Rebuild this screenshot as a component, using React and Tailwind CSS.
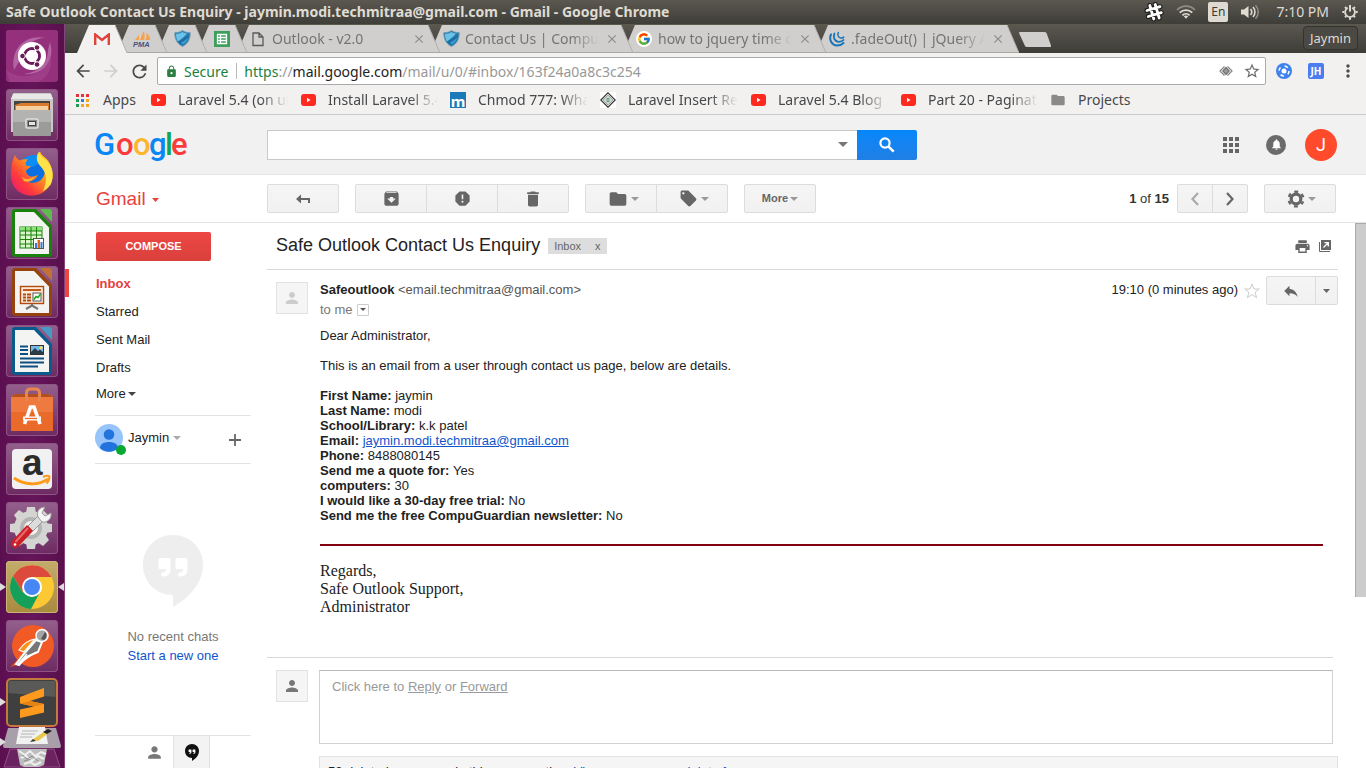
import React from "react";
import {
  MdArchive,
  MdReport,
  MdDelete,
  MdFolder,
  MdLocalOffer,
  MdSettings,
  MdPrint,
  MdPerson,
  MdReply,
  MdStarBorder,
  MdSearch,
  MdNotifications,
  MdArrowBack,
  MdArrowForward,
  MdRefresh,
  MdMoreVert,
  MdLock,
  MdClose,
} from "react-icons/md";
import { FcGoogle } from "react-icons/fc";

/* ---------- shared pieces ---------- */

function Caret({ className = "text-[#999]" }) {
  return (
    <svg viewBox="0 0 8 4" className={"h-1 w-2 shrink-0 " + className} aria-hidden="true">
      <path d="M0 0h8L4 4z" fill="currentColor" />
    </svg>
  );
}

function Shield() {
  return (
    <svg viewBox="0 0 17 17" className="h-[17px] w-[17px] shrink-0">
      <path d="M8.500.5C6.500 2 3.500 2.800.8 2.600.6 9 3 14 8.500 16.500 14 14 16.400 9 16.200 2.600 13.500 2.800 10.500 2 8.500.5z" fill="#2e7fae" stroke="#6f98ac" strokeWidth=".8" />
      <path d="M8.500 2C6.600 3.300 4.500 3.900 2 3.900c0 3 .7 5.500 2 7.500C8 8.500 11 6 13 3.600 11.300 3.400 10 3 8.500 2z" fill="#6cc3ea" />
      <path d="M4 11.500C8 10 12 7 14.800 4c.2 4.500-1.800 9-6.300 11.100C6.500 14.300 5 13 4 11.500z" fill="#1c6ea2" />
      <path d="M7 12.500c3-1.200 5.500-3.200 7.300-5.500-.6 3.200-2.500 6-5.800 7.600z" fill="#3aa0d2" />
    </svg>
  );
}

function YouTube() {
  return (
    <svg viewBox="0 0 16 12" className="h-3 w-4 shrink-0">
      <rect x="1" y="0" width="15" height="12" rx="3" fill="#ff2a1f" />
      <path d="M7 3.800v4.400L10.500 6z" fill="#fff" />
    </svg>
  );
}

/* ---------- desktop panel ---------- */

function TopPanel() {
  return (
    <header className="flex h-6 shrink-0 items-center justify-between bg-linear-to-b from-[#5b5850] to-[#3e3d38] pr-2 pl-1.5 text-[#dfdbd2]">
      <h1 className="truncate text-[14px] leading-6 font-bold">
        Safe Outlook Contact Us Enquiry - jaymin.modi.techmitraa@gmail.com - Gmail - Google Chrome
      </h1>
      <div className="flex shrink-0 items-center gap-3">
        <svg viewBox="0 0 20 20" className="h-5 w-5" fill="none" strokeLinecap="round">
          <path d="M5.800 3.500l4 13.500M11.200 2.500l4 13.500M3 8.500l13-3.800M4.300 14.500l13-3.800" stroke="#1e1e1c" strokeWidth="5" />
          <path d="M5.800 3.500l4 13.500M11.200 2.500l4 13.500M3 8.500l13-3.800M4.300 14.500l13-3.800" stroke="#fff" strokeWidth="2.800" />
        </svg>
        <svg viewBox="0 0 20 14" className="h-3.5 w-5" fill="none" strokeWidth="1.800">
          <path d="M1 5C6-.2 14-.2 19 5" stroke="#8f8c84" />
          <path d="M3.700 7.700c3.600-3.500 9-3.500 12.600 0" stroke="#dfdbd2" />
          <path d="M6.400 10.300c2-2 5.200-2 7.200 0" stroke="#dfdbd2" />
          <path d="M7.800 11.300L10 13.800l2.200-2.500c-1.300-1.100-3.100-1.100-4.400 0z" fill="#dfdbd2" />
        </svg>
        <span className="flex h-5 w-5 items-center justify-center rounded-[2px] bg-[#dfdbd2] text-xs leading-none text-[#3c3b37]">En</span>
        <svg viewBox="0 0 20 16" className="h-4 w-5" fill="none" strokeWidth="1.600">
          <path d="M1 5.500h3L8.500 2v12L4 10.500H1z" fill="#dfdbd2" />
          <path d="M10.500 5c1.500 1.700 1.500 4.300 0 6M13 3c2.600 2.800 2.600 7.200 0 10" stroke="#dfdbd2" />
          <path d="M15.500 1.200c3.700 4 3.700 9.600 0 13.600" stroke="#8f8c84" />
        </svg>
        <time className="mr-px ml-1 text-[14px] leading-6">7:10 PM</time>
        <svg viewBox="0 0 16 16" className="h-4 w-4" fill="none" stroke="#dfdbd2">
          <path d="M5.700 3.800a4.900 4.900 0 1 0 4.600 0" strokeWidth="1.800" />
          <path d="M8 1v6.500" strokeWidth="2" />
          <path d="M3 3l1.300 1.300M13 3l-1.300 1.300M.3 8h2M13.700 8h2M3 13.200l1.300-1.300M13 13.200l-1.300-1.300M8 13.500v2.300" strokeWidth="2" />
        </svg>
      </div>
    </header>
  );
}

/* ---------- launcher ---------- */

function Dash() {
  return (
    <svg viewBox="0 0 52 52">
      <rect width="52" height="52" rx="4" fill="#94307c" />
      <path d="M8 40C4 18 20 4 40 8 28 8 16 16 14 30zM44 12c6 20-8 34-26 32 14-2 24-10 24-24z" fill="#c07ab0" opacity=".7" />
      <path d="M0 40c16 12 40 6 44-14 4 10-2 22-12 26H4z" fill="#a74791" opacity=".6" />
      <circle cx="26" cy="26" r="14" fill="#fff" />
      <circle cx="26" cy="26" r="7.500" fill="none" stroke="#6b1c5b" strokeWidth="3" />
      <path d="M26 26L14 26M26 26l6.500-10.500M26 26l6.500 10.500" stroke="#fff" strokeWidth="1.500" />
      <circle cx="26" cy="26" r="6" fill="#fff" />
      <g fill="#6b1c5b" stroke="#fff" strokeWidth="1">
        <circle cx="16.500" cy="26" r="2.800" />
        <circle cx="31" cy="17.500" r="2.800" />
        <circle cx="31" cy="34.500" r="2.800" />
      </g>
    </svg>
  );
}

function Files() {
  return (
    <svg viewBox="0 0 52 52">
      <path d="M7 5q0-1 1-1h36q1 0 1 1l2 5v33H5V10z" fill="#c9c9c7" />
      <path d="M7 5h38l2 5H5z" fill="#e8e8e6" />
      <rect x="8" y="12" width="36" height="11" fill="#454441" />
      <path d="M9 16l6-2h28v8H9z" fill="#d97a2d" />
      <rect x="10" y="17" width="32" height="4" fill="#f5d0a0" />
      <path d="M7 21h38v25q0 1-1 1H8q-1 0-1-1z" fill="#9b9b99" />
      <path d="M7 21h38v12H7z" fill="#b3b3b1" />
      <rect x="20" y="30" width="12" height="9" rx="1.500" fill="#8a8a88" stroke="#e0e0de" strokeWidth="1.600" />
      <rect x="22.500" y="32.500" width="7" height="4" fill="#e4e4e4" stroke="#444" />
    </svg>
  );
}

function Firefox() {
  return (
    <svg viewBox="0 0 52 52">
      <defs>
        <linearGradient id="fxBody" x1="1" y1="0" x2="0" y2="1">
          <stop offset="0" stopColor="#ffe226" />
          <stop offset=".4" stopColor="#ff9a1c" />
          <stop offset=".7" stopColor="#ff3a3d" />
          <stop offset="1" stopColor="#e3127a" />
        </linearGradient>
      </defs>
      <circle cx="27" cy="25" r="17" fill="#0a6fe0" />
      <path d="M14 14c6-8 18-9 24-4-4 6-12 10-18 10z" fill="#0b8df5" />
      <path d="M9 7c1 3 3 4.500 5 5.500 3-1.500 6-1.200 8-1-2 1.500-3 3.500-2 6l5 1-5 4c0 6 7 8 12 4-2 6-8 8-12 6 8 6 20 0 19-12-1-5-6-8-8-11 0-3 1-5 3-6 1 4 5 5 8 9 4 6 6 13 4 20-3 9-11 15-20 15C13 48 4 38 5 25c0-7 1-12 4-18z" fill="url(#fxBody)" />
      <path d="M33 4c1 4 5 6 8 9 6 7 7 15 4 23-3 4-6 6-8 7 5-10 3-18-1-23-5-5-7-10-3-16z" fill="#ffe14a" />
      <path d="M15 28c3 4 9 4 14 0-2 5-7 7-11 5z" fill="#ffb02e" />
    </svg>
  );
}

function OfficeSheet({ color, light, children }) {
  return (
    <svg viewBox="0 0 52 52">
      <path d="M9 2h21l16 17v28q0 3-3 3H9q-3 0-3-3V5q0-3 3-3z" fill={color} />
      <path d="M34 2h9q3 0 3 3v10z" fill={light} />
      <path d="M9 5h19L43 20.500V47H9z" fill="#f4f4f2" />
      {children}
    </svg>
  );
}

function Calc() {
  return (
    <OfficeSheet color="#18820c" light="#5ebb4f">
      <rect x="14" y="20" width="22" height="21" fill="#d9f7c9" stroke="#18820c" />
      <rect x="14" y="20" width="22" height="4" fill="#8ee07a" />
      <path d="M14 24h22M14 28h22M14 32.500h22M14 37h22M19.500 20v21M25 20v21M30.500 20v21" stroke="#18820c" fill="none" />
      <rect x="27.500" y="31.500" width="10" height="10" fill="#fff" stroke="#555" />
      <path d="M29 36h2v5h-2z" fill="#2d7fd3" />
      <path d="M31.500 33h2.500v8h-2.500z" fill="#e8641b" />
      <path d="M34.500 35h2v6h-2z" fill="#2d7fd3" />
    </OfficeSheet>
  );
}

function Impress() {
  return (
    <OfficeSheet color="#97430e" light="#c1703a">
      <rect x="14.500" y="20.500" width="23" height="17" fill="#fdebdc" stroke="#b04a10" strokeWidth="1.400" />
      <path d="M17 24h18" stroke="#c35a1a" strokeWidth="2" />
      <path d="M17 28.500h3M17 31.500h3M17 34.500h3M21 28.500h4M21 31.500h4M21 34.500h4" stroke="#b04a10" strokeWidth="1.800" />
      <rect x="27" y="27" width="8" height="8" fill="#fff" stroke="#555" />
      <path d="M28 33.500l2-3 2 1 2.500-3.500" stroke="#1ca51c" strokeWidth="1.500" fill="none" />
      <path d="M26 38v2M20 43l6-3.500 6 3.500" stroke="#777" strokeWidth="2.200" fill="none" />
    </OfficeSheet>
  );
}

function Writer() {
  return (
    <OfficeSheet color="#0a5a8c" light="#4a98c4">
      <path d="M14 21.500h8M14 25h8M14 29h8M14 33.500h24M14 37.500h24M14 41.500h18" stroke="#0a4f80" strokeWidth="2" />
      <rect x="24.500" y="20.500" width="13" height="9" fill="#73b9ec" stroke="#333" />
      <path d="M25 29v-2l4-4 3 3 2-1.500 3.500 3V29z" fill="#2c3c46" />
      <circle cx="35" cy="22.800" r="1.500" fill="#ffe14a" />
    </OfficeSheet>
  );
}

function Software() {
  return (
    <svg viewBox="0 0 52 52">
      <path d="M5 13l4-3h34l4 3v34H5z" fill="#ee7a3f" />
      <path d="M5 13l4-3h34l4 3z" fill="#b3501e" />
      <path d="M5 28h42v19H5z" fill="#ea6a2a" />
      <path d="M20.500 17V9q0-4 4-4h5q4 0 4 4v8" fill="none" stroke="#e8864f" strokeWidth="3" />
      <path d="M18.500 40l6-17h3.500l6 17" fill="none" stroke="#fff" strokeWidth="3.600" />
      <path d="M17 34.500h18" stroke="#fff" strokeWidth="4" />
      <path d="M19 34.500h12" stroke="#ea6a2a" strokeWidth="1.300" />
    </svg>
  );
}

function Amazon() {
  return (
    <svg viewBox="0 0 52 52">
      <rect x="6" y="6" width="40" height="40" rx="4" fill="#f1f1f1" />
      <text x="16" y="32" fontFamily="Liberation Sans, sans-serif" fontWeight="700" fontSize="37" fill="#2b2b2b">a</text>
      <path d="M8 35c10 7 24 8 34 1" fill="none" stroke="#ff9a1a" strokeWidth="2.800" />
      <path d="M37 34c3-1.500 5-1.500 6.500-.5 0 2.500-1 5-3 7" fill="none" stroke="#ff9a1a" strokeWidth="2" />
    </svg>
  );
}

function SystemSettings() {
  return (
    <svg viewBox="0 0 52 52">
      <g fill="#d4d4d2">
        <circle cx="25" cy="26" r="17" />
        <path d="M21 5h8l1 7H20zM21 47h8l1-7H20zM4 22v8l7 1V21zM46 22v8l-7 1V21zM8 13l5-5 6 4-7 7zM37 8l6 6-4 6-8-8zM8 39l5 5 6-4-7-7zM37 44l6-6-4-6-8 8z" />
      </g>
      <circle cx="25" cy="26" r="11" fill="#b4b4b2" />
      <circle cx="25" cy="26" r="7" fill="#f1f1f0" />
      <path d="M22 24L33 13l5 5-11 11z" fill="#dcdcdc" stroke="#999" />
      <path d="M32 15c-2-5 1-10 7-10l-3 6 3 3 6-3c1 6-4 10-9 9z" fill="#f4f4f4" stroke="#999" />
      <path d="M21 23l6 6-15 16c-4 3-9-2-6-6z" fill="#cc2027" />
      <path d="M22 26L9.500 40" stroke="#e9686b" strokeWidth="2" />
      <circle cx="9" cy="42.500" r="1.300" fill="#fff" />
    </svg>
  );
}

function ChromeIcon() {
  return (
    <svg viewBox="0 0 52 52">
      <circle cx="26" cy="26" r="22" fill="#fcc934" />
      <path d="M26 16h19.500A22 22 0 0 0 7 15l9.500 16z" fill="#dc4a3d" />
      <path d="M7 15a22 22 0 0 0 18 33l9-17-8 5-9.500-5z" fill="#14a05a" />
      <circle cx="26" cy="26" r="10" fill="#fff" />
      <circle cx="26" cy="26" r="8" fill="#4787f3" />
    </svg>
  );
}

function Postman() {
  return (
    <svg viewBox="0 0 52 52">
      <circle cx="27" cy="26" r="21" fill="#f15a24" />
      <path d="M4 47l9-9 2 6z" fill="#e0491c" />
      <path d="M10 44l7-9 13-15 6 2-4 10-12 5-7 8z" fill="#777" stroke="#fff" strokeWidth="2" />
      <path d="M13 30c4-6 9-10 16-11L18 32z" fill="#f7941e" stroke="#fff" strokeWidth="1.200" />
      <circle cx="36" cy="15.500" r="6" fill="#a5a5a5" stroke="#fff" strokeWidth="1.500" />
      <path d="M35 19l4-7c2 2 2 6-1 8z" fill="#555" />
      <path d="M12 44l9-10M17 41l13-9" stroke="#fff" strokeWidth="1.300" />
    </svg>
  );
}

function Sublime() {
  return (
    <svg viewBox="0 0 52 49">
      <rect x="1" y="1" width="50" height="47" rx="4" fill="#3f3f3f" stroke="#c47a3c" strokeWidth="2" />
      <path d="M2.500 3h47v16L2.500 15z" fill="#6a6a68" opacity=".6" />
      <path d="M14 19L38 10v8.500L24 23l14 3v8.500L14 40v-8.500l14-3-14-3z" fill="#ff9a1f" />
      <path d="M14 25.500L24 23l14 3-10 2.500z" fill="#e58412" />
    </svg>
  );
}

function TrashStack() {
  return (
    <svg viewBox="0 0 60 41" className="h-[41px] w-[60px]">
      <path d="M6 1h48l5 18q0 2-2 2H3q-2 0-2-2z" fill="#a99fab" />
      <path d="M8 22h44l6 18H2z" fill="#6b2260" stroke="#8d4d84" />
      <path d="M17 0h26l3 17H14z" fill="#f1f1f1" />
      <path d="M20 4h16M19 7h14M18 10h12" stroke="#b5b5b5" />
      <path d="M30 13l13-9 5 1-12 9z" fill="#e8c84a" />
      <path d="M41 5l5-3 4 2-5 3z" fill="#222" />
      <path d="M28 15l3-3 3 2z" fill="#333" />
      <path d="M15 22h30l-3 16-5 2H22l-4-2z" fill="#bdbdbd" />
      <path d="M17 24l6 4 5-4 5 5 6-4 5 2M19 31l5-2 6 5 6-5 6 3M22 37l6-2 5 3 6-3" stroke="#efefef" strokeWidth="2" fill="none" />
      <path d="M20 28l5 4 5-3 6 5M22 34l7-2" stroke="#8e8e8e" fill="none" />
    </svg>
  );
}

const launcherItems = [
  { name: "Search your computer", icon: <Dash /> },
  { name: "Files", icon: <Files /> },
  { name: "Firefox", icon: <Firefox /> },
  { name: "LibreOffice Calc", icon: <Calc /> },
  { name: "LibreOffice Impress", icon: <Impress /> },
  { name: "LibreOffice Writer", icon: <Writer /> },
  { name: "Ubuntu Software", icon: <Software /> },
  { name: "Amazon", icon: <Amazon /> },
  { name: "System Settings", icon: <SystemSettings /> },
  { name: "Google Chrome", icon: <ChromeIcon />, active: true },
  { name: "Postman", icon: <Postman /> },
];

function Launcher() {
  return (
    <nav aria-label="Launcher" className="flex w-[65px] shrink-0 flex-col items-center gap-[7px] overflow-hidden border-r border-[#84447c] bg-linear-to-r from-[#5c0f50] via-[#66155a] to-[#58104c] pt-1.5">
      {launcherItems.map((item) => (
        <button
          key={item.name}
          aria-label={item.name}
          className={
            item.active
              ? "relative h-[52px] w-[52px] shrink-0 rounded-[4px] bg-linear-to-b from-[#c4ac6c] to-[#a98b3d] shadow-[inset_0_0_0_1px_#c9b57c]"
              : "relative h-[52px] w-[52px] shrink-0 rounded-[4px] bg-linear-to-b from-[#94608c] to-[#6d2a62] shadow-[inset_0_0_0_1px_#8d5385]"
          }
        >
          {item.icon}
          {item.active && (
            <>
              <span className="absolute top-[22px] -left-1.5 h-2 w-1.5 bg-[#ddd] [clip-path:polygon(0_0,100%_50%,0_100%)]" />
              <span className="absolute top-[22px] -right-1.5 h-2 w-1.5 bg-[#ddd] [clip-path:polygon(100%_0,0_50%,100%_100%)]" />
            </>
          )}
        </button>
      ))}
      <div className="flex flex-col items-center">
        <button aria-label="Sublime Text" className="relative -mt-px h-[49px] w-[52px] shrink-0">
          <Sublime />
          <span className="absolute top-[20px] -left-1.5 h-2 w-1.5 bg-[#ddd] [clip-path:polygon(0_0,100%_50%,0_100%)]" />
        </button>
        <button aria-label="Text Editor and Trash" className="relative shrink-0">
          <TrashStack />
          <span className="absolute top-[11px] -left-0.5 h-2 w-1.5 bg-[#ddd] [clip-path:polygon(0_0,100%_50%,0_100%)]" />
        </button>
      </div>
    </nav>
  );
}

/* ---------- browser chrome ---------- */

const tabs = [
  {
    name: "Gmail",
    active: true,
    z: "z-[8]",
    icon: (
      <svg viewBox="0 0 16 12" className="h-3 w-4">
        <path d="M1 0h14v12H1z" fill="#f2f2f2" />
        <path d="M1.200 12V1.500L8 7l6.800-5.500V12" fill="none" stroke="#e0433a" strokeWidth="2.400" />
      </svg>
    ),
  },
  {
    name: "phpMyAdmin",
    z: "z-[7]",
    icon: (
      <svg viewBox="0 0 18 16" className="h-4 w-[18px]">
        <path d="M2 9l4-5v5zM7 9l3.500-9c1.500 3 1.500 6 .5 9zM12 9c2-2 2-5 1-7 3 1 4 4 4 7z" fill="#f7a24a" />
        <text x="0" y="15.500" fontFamily="Liberation Sans, sans-serif" fontWeight="700" fontStyle="italic" fontSize="7.500" fill="#4c4f7a">PMA</text>
      </svg>
    ),
  },
  { name: "Safe Outlook", z: "z-[6]", icon: <Shield /> },
  {
    name: "Google Sheets",
    z: "z-[5]",
    icon: (
      <svg viewBox="0 0 16 16" className="h-4 w-4">
        <rect width="16" height="16" fill="#3c9f5c" />
        <path d="M3.500 3.500h9v9h-9zM3.500 6.500h9M3.500 9.500h9M6.500 3.500v9" fill="none" stroke="#fff" strokeWidth="1.300" />
      </svg>
    ),
  },
  {
    title: "Outlook - v2.0",
    z: "z-[4]",
    icon: (
      <svg viewBox="0 0 16 16" className="h-4 w-4">
        <path d="M3 2h6l4 4v8.500H3zM9 2v4h4" fill="none" stroke="#5a5a5a" strokeWidth="1.300" />
      </svg>
    ),
  },
  { title: "Contact Us | CompuG", z: "z-[3]", icon: <Shield /> },
  {
    title: "how to jquery time ou",
    z: "z-[2]",
    icon: (
      <span className="flex h-4 w-4 items-center justify-center rounded-full bg-white">
        <FcGoogle size={14} />
      </span>
    ),
  },
  {
    title: ".fadeOut() | jQuery A",
    z: "z-[1]",
    icon: (
      <svg viewBox="0 0 16 16" className="h-4 w-4" fill="none" stroke="#1b75b5" strokeLinecap="round">
        <path d="M2 3.500C-.3 8.500 2.500 14 8 14.500c3 0 5-1 6.500-2.500" strokeWidth="2" />
        <path d="M5.500 2.500C3.500 6.500 5.800 10.300 9.500 10.800c2.200.1 4-.6 5-1.800" strokeWidth="1.800" />
        <path d="M9.300 1.500C8.200 4 9.300 6.600 11.500 7c1.300.2 2.500-.2 3.200-.9" strokeWidth="1.500" />
      </svg>
    ),
  },
];

function Tab({ tab }) {
  const fill = tab.active ? "#f2f1f0" : "#d0cfce";
  return (
    <div className={"-ml-2.5 flex h-[29px] min-w-0 " + tab.z + " " + (tab.title ? "w-[203px]" : "w-[50px] shrink-0")}>
      <svg viewBox="0 0 12 29" className="h-[29px] w-3 shrink-0">
        <path d="M0 29L12 1V29z" fill={fill} />
        {!tab.active && <path d="M0 28.500h12" stroke="#a9a8a6" />}
      </svg>
      <div
        className={
          "mt-px flex min-w-0 flex-1 items-center " +
          (tab.active ? "bg-[#f2f1f0]" : "border-b border-[#a9a8a6] bg-[#d0cfce]") +
          (tab.title ? "" : " justify-center")
        }
      >
        {tab.title ? (
          <>
            <span className="flex w-[18px] shrink-0 justify-center">{tab.icon}</span>
            <span className="ml-[5px] flex-1 overflow-hidden text-[14px] whitespace-nowrap text-[#757472] [mask-image:linear-gradient(to_right,#000_80%,transparent)]">{tab.title}</span>
            <button aria-label={"Close " + tab.title} className="mr-0.5 ml-1.5 shrink-0 text-[#8c8b89]">
              <MdClose size={14} />
            </button>
          </>
        ) : (
          <button aria-label={tab.name}>{tab.icon}</button>
        )}
      </div>
      <svg viewBox="0 0 12 29" className="h-[29px] w-3 shrink-0">
        <path d="M0 1L12 29H0z" fill={fill} />
        {!tab.active && <path d="M0 28.500h12" stroke="#a9a8a6" />}
        <path d="M0 1L11.800 28.500" stroke="#b0afad" fill="none" />
      </svg>
    </div>
  );
}

function TabStrip() {
  return (
    <div className="flex h-[29px] shrink-0 bg-linear-to-b from-[#5b5850] to-[#3e3d38] pr-2 pl-[22px]">
      {tabs.map((tab, i) => (
        <Tab key={i} tab={tab} />
      ))}
      <button aria-label="New tab" className="mt-2 h-[15px] w-8 shrink-0">
        <svg viewBox="0 0 32 15">
          <path d="M0 1q0-1 1-1h24q2 0 2.500 1L32 13.500q.5 1.500-1 1.500H8q-1.500 0-2-1z" fill="#d0cfce" />
        </svg>
      </button>
      <button className="mt-0.5 ml-auto h-6 shrink-0 self-start rounded-[4px] border border-[#33322e] bg-[#4b4943] px-1.5 text-[13px] leading-5 text-[#dfdbd2]">
        Jaymin
      </button>
    </div>
  );
}

function AddressBar() {
  return (
    <div className="flex h-9 shrink-0 items-center bg-[#f2f1f0] pr-0.5 pl-1 text-[#4a4a4a]">
      <button aria-label="Back" className="flex w-7 justify-center"><MdArrowBack size={20} /></button>
      <button aria-label="Forward" className="flex w-7 justify-center text-[#cfcecd]"><MdArrowForward size={20} /></button>
      <button aria-label="Reload" className="flex w-7 justify-center"><MdRefresh size={21} /></button>
      <div className="mr-0.5 ml-1 flex h-7 flex-1 items-center rounded-[2px] border border-[#aaa] bg-white pr-1 pl-[7px] text-[14px]">
        <MdLock size={13} className="text-[#2a7f41]" />
        <span className="ml-1.5 text-[#1a7f3c]">Secure</span>
        <span className="mr-[7px] ml-2 h-4 w-px bg-[#bbb]" />
        <span className="flex-1 whitespace-nowrap text-[#999]">
          <span className="text-[#1a7f3c]">https</span>://<span className="text-[#222]">mail.google.com</span>/mail/u/0/#inbox/163f24a0a8c3c254
        </span>
        <svg viewBox="0 0 14 12" className="mr-2.5 h-3 w-3.5">
          <path d="M5.500 1.500L1 6l4.500 4.500M8.500 1.500L13 6l-4.500 4.500" fill="none" stroke="#858585" strokeWidth="1.200" />
          <path d="M7 1.500L11 6l-4 4.500L3 6z" fill="#757575" />
          <path d="M7 4v4M5 6h4" stroke="#aaa" />
        </svg>
        <button aria-label="Bookmark this page" className="text-[#6b6b6b]"><MdStarBorder size={18} /></button>
      </div>
      <button aria-label="Extension" className="flex w-8 justify-center">
        <svg viewBox="0 0 16 16" className="h-4 w-4">
          <circle cx="8" cy="8" r="8" fill="#3f82ee" />
          <circle cx="8" cy="8" r="2.500" fill="#fff" />
          <circle cx="8" cy="8" r="5" fill="none" stroke="#fff" strokeWidth="1.500" strokeDasharray="3.500 4.350" />
        </svg>
      </button>
      <button className="flex w-8 justify-center">
        <span className="flex h-4 w-4 items-center justify-center rounded-[2px] bg-[#4b7df0] text-[10px] leading-none font-bold text-white">JH</span>
      </button>
      <button aria-label="Menu" className="flex w-8 justify-center"><MdMoreVert size={20} /></button>
    </div>
  );
}

const bookmarks = [
  { title: "Laravel 5.4 (on ub", icon: <YouTube /> },
  { title: "Install Laravel 5.4", icon: <YouTube /> },
  {
    title: "Chmod 777: What",
    icon: <span className="flex h-4 w-4 items-end justify-center overflow-hidden bg-[#1d7ab8] text-[15px] leading-[14px] font-bold text-white">m</span>,
  },
  {
    title: "Laravel Insert Re",
    icon: (
      <svg viewBox="0 0 16 16" className="h-4 w-4 bg-white">
        <path d="M8 .8L15.200 8 8 15.200.8 8z" fill="#fff" stroke="#333" strokeWidth="1.200" />
        <path d="M8 3.300L12.700 8 8 12.700 3.300 8z" fill="#fff" stroke="#555" strokeWidth=".8" />
        <path d="M5.500 8h5M6.500 6.300h3M6.500 9.700h3" stroke="#2f7a4a" strokeWidth="1.100" />
      </svg>
    ),
  },
  { title: "Laravel 5.4 Blog", icon: <YouTube /> },
  { title: "Part 20 - Paginat", icon: <YouTube /> },
];

function BookmarksBar() {
  const grid = ["#e8303a", "#e8303a", "#e8303a", "#1f9b55", "#3b78e7", "#f6a623", "#1f9b55", "#f6a623", "#f6a623"];
  return (
    <nav aria-label="Bookmarks" className="flex h-[26px] shrink-0 items-start border-b border-[#cbcac8] bg-[#f2f1f0] pl-2.5 text-[14px] leading-[22px] text-[#47484a]">
      <a href="#apps" className="flex w-[75px] shrink-0 items-center gap-[13px]">
        <svg viewBox="0 0 15 15" className="h-[15px] w-[15px] shrink-0">
          {grid.map((c, i) => (
            <rect key={i} x={1 + (i % 3) * 5} y={1 + Math.floor(i / 3) * 5} width="3" height="3" fill={c} />
          ))}
        </svg>
        Apps
      </a>
      {bookmarks.map((b) => (
        <a key={b.title} href="#bookmark" className="flex w-[150px] items-center gap-3">
          {b.icon}
          <span className="w-[110px] overflow-hidden whitespace-nowrap [mask-image:linear-gradient(to_right,#000_75%,transparent)]">{b.title}</span>
        </a>
      ))}
      <a href="#projects" className="flex items-center gap-3">
        <MdFolder size={16} className="text-[#8a8a88]" />
        Projects
      </a>
    </nav>
  );
}

/* ---------- Gmail ---------- */

function GoogleHeader() {
  return (
    <header className="flex h-[60px] shrink-0 items-center border-b border-[#e5e5e5] bg-[#f1f1f1] pr-[29px] pl-[30px]">
      <a href="#google" aria-label="Google" className="w-[172px] shrink-0">
        <svg viewBox="0 0 94 36" className="h-9 w-[94px]" fontFamily="Roboto, sans-serif" fontWeight="500" fontSize="31">
          <text y="28">
            <tspan x="-1" fill="#0a86f5">G</tspan>
            <tspan x="21" fill="#fb3b3b">o</tspan>
            <tspan x="38" fill="#fdb52e">o</tspan>
            <tspan x="54" fill="#0a86f5">g</tspan>
            <tspan x="70" fill="#10a558">l</tspan>
            <tspan x="76" fill="#fb3b3b">e</tspan>
          </text>
        </svg>
      </a>
      <form className="flex h-[30px] w-[650px]" role="search">
        <div className="flex flex-1 items-center border border-r-0 border-[#c9c9c9] bg-white">
          <input aria-label="Search mail" className="h-full min-w-0 flex-1 px-2 outline-none" />
          <button type="button" aria-label="Search options" className="flex h-full w-7 items-center justify-center">
            <svg viewBox="0 0 10 5" className="h-[5px] w-2.5"><path d="M0 0h10L5 5z" fill="#777" /></svg>
          </button>
        </div>
        <button type="button" aria-label="Search" className="flex w-[60px] items-center justify-center rounded-r-[2px] bg-linear-to-b from-[#0487fb] to-[#1f7fe4] text-white">
          <svg viewBox="0 0 16 16" className="h-4 w-4" fill="none" stroke="#fff">
            <circle cx="6" cy="6" r="4.600" strokeWidth="2.200" />
            <path d="M9.300 9.300l5.400 5.400" strokeWidth="2.600" />
          </svg>
        </button>
      </form>
      <div className="ml-auto flex items-center">
        <button aria-label="Google apps" className="mr-[27px]">
          <svg viewBox="0 0 16 16" className="h-4 w-4" fill="#666">
            <path d="M0 0h4v4H0zM6 0h4v4H6zM12 0h4v4h-4zM0 6h4v4H0zM6 6h4v4H6zM12 6h4v4h-4zM0 12h4v4H0zM6 12h4v4H6zM12 12h4v4h-4z" />
          </svg>
        </button>
        <button aria-label="Notifications" className="mr-[19px] flex h-5 w-5 items-center justify-center rounded-full bg-[#6b6b6b] text-white">
          <MdNotifications size={13} />
        </button>
        <button className="h-8 w-8 rounded-full bg-[#ff4a2b] font-[Roboto,sans-serif] text-lg leading-8 text-white">J</button>
      </div>
    </header>
  );
}

const btn = "flex h-[29px] items-center justify-center border border-[#dcdcdc] bg-linear-to-b from-[#f5f5f5] to-[#f1f1f1] text-[#666]";

function Toolbar() {
  return (
    <div className="flex h-12 shrink-0 items-center border-b border-[#e5e5e5] pr-[30px] pl-[31px]">
      <button className="flex w-[171px] shrink-0 items-center gap-1.5 pt-0.5 text-left text-[19px] text-[#e8423e]">
        Gmail <svg viewBox="0 0 7 4" className="h-1 w-[7px]"><path d="M0 0h7L3.500 4z" fill="#e8423e" /></svg>
      </button>
      <div className="flex gap-4">
        <button aria-label="Back to inbox" className={btn + " w-[72px] rounded-[2px]"}>
          <svg viewBox="0 0 14 10" className="h-2.5 w-3.5"><path d="M0 5l5-4.500V4h9v5h-2V6H5v3.500z" fill="#666" /></svg>
        </button>
        <div className="flex">
          <button aria-label="Archive" className={btn + " w-[72px] rounded-l-[2px]"}><MdArchive size={19} /></button>
          <button aria-label="Report spam" className={btn + " -ml-px w-[72px]"}><MdReport size={19} /></button>
          <button aria-label="Delete" className={btn + " -ml-px w-[72px] rounded-r-[2px]"}><MdDelete size={20} /></button>
        </div>
        <div className="flex">
          <button aria-label="Move to" className={btn + " w-[72px] gap-[3px] rounded-l-[2px] pl-1"}><MdFolder size={20} /><Caret /></button>
          <button aria-label="Labels" className={btn + " -ml-px w-[72px] gap-[3px] rounded-r-[2px] pl-1"}><MdLocalOffer size={19} /><Caret /></button>
        </div>
        <button className={btn + " w-[72px] gap-0.5 rounded-[2px] text-[11px] font-bold text-[#444]"}>More<Caret /></button>
      </div>
      <div className="ml-auto flex items-center">
        <p className="mr-2 text-[13px] text-[#333]"><b>1</b> of <b>15</b></p>
        <button aria-label="Newer" className={btn + " w-9 rounded-l-[2px]"}>
          <svg viewBox="0 0 8 14" className="h-3.5 w-2"><path d="M7 1L1.500 7 7 13" fill="none" stroke="#aaa" strokeWidth="2.200" /></svg>
        </button>
        <button aria-label="Older" className={btn + " -ml-px w-9 rounded-r-[2px]"}>
          <svg viewBox="0 0 8 14" className="h-3.5 w-2"><path d="M1 1l5.500 6L1 13" fill="none" stroke="#666" strokeWidth="2.200" /></svg>
        </button>
        <button aria-label="Settings" className={btn + " ml-4 w-[72px] gap-[3px] rounded-[2px] pl-0.5"}>
          <svg viewBox="0 0 18 18" className="h-[18px] w-[18px]" fill="none" stroke="#666">
            <circle cx="9" cy="9" r="4.800" strokeWidth="3.200" />
            <circle cx="9" cy="9" r="7.400" strokeWidth="2.400" strokeDasharray="3.800 3.950" strokeDashoffset="1.900" transform="rotate(30 9 9)" />
          </svg>
          <Caret />
        </button>
      </div>
    </div>
  );
}

function Bubble({ className, fill, quote }) {
  return (
    <svg viewBox="0 0 60 72" className={className}>
      <path d="M30 0C13 0 0 13 0 30s13 30 30 30v12c16-9 30-24 30-42C60 13 47 0 30 0z" fill={fill} />
      <path d="M17 23h9q1.500 0 1.500 1.500V34c0 5-2.500 7.500-7.500 7.500q-2 0-2-2t2-2q3-.5 3-3.500h-6q-1.500 0-1.500-1.500v-8Q15.500 23 17 23zM34 23h9q1.500 0 1.500 1.500V34c0 5-2.500 7.500-7.500 7.500q-2 0-2-2t2-2q3-.5 3-3.500h-6q-1.500 0-1.500-1.500v-8Q32.500 23 34 23z" fill={quote} />
    </svg>
  );
}

function Sidebar() {
  const folders = ["Starred", "Sent Mail", "Drafts"];
  return (
    <aside className="flex w-[202px] shrink-0 flex-col text-[13px] text-[#222]">
      <button className="mt-[9px] ml-[31px] h-[29px] w-[115px] rounded-[2px] bg-linear-to-b from-[#ee4743] to-[#d9403c] text-[11px] font-bold text-white">
        COMPOSE
      </button>
      <nav aria-label="Folders" className="mt-2 flex flex-col leading-[26px]">
        <a href="#inbox" className="border-l-4 border-[#ef4640] pt-0.5 pl-[27px] font-bold text-[#e8423e]">Inbox</a>
        {folders.map((f) => (
          <a key={f} href="#folder" className="pt-0.5 pl-[31px]">{f}</a>
        ))}
        <button className="flex items-center gap-0.5 pb-0.5 pl-[31px] text-left">More <Caret className="text-[#444]" /></button>
      </nav>
      <div className="mt-1.5 mr-4 ml-[30px] flex h-[49px] items-center border-y border-[#e2e2e2]">
        <div className="relative -mt-1">
          <svg viewBox="0 0 28 28" className="h-7 w-7">
            <circle cx="14" cy="14" r="14" fill="#97c4fb" />
            <circle cx="14" cy="10.500" r="5.300" fill="#2273dd" />
            <path d="M5 24c0-4 4-6 9-6s9 2 9 6c-5 5-13 5-18 0z" fill="#2273dd" />
          </svg>
          <span className="absolute -right-[3px] -bottom-[3px] h-2.5 w-2.5 rounded-full bg-[#08a832]" />
        </div>
        <button className="ml-[5px] flex items-center gap-1 pb-1">Jaymin <Caret className="text-[#aaa]" /></button>
        <button aria-label="New conversation" className="mr-2.5 ml-auto text-[#666]">
          <svg viewBox="0 0 12 12" className="h-3 w-3"><path d="M6 0v12M0 6h12" stroke="currentColor" strokeWidth="1.800" /></svg>
        </button>
      </div>
      <div className="mt-[71px] mr-4 ml-[30px] flex flex-col items-center leading-[19px]">
        <Bubble className="h-[72px] w-[60px]" fill="#eeeeee" quote="#ffffff" />
        <p className="mt-5 text-[#777]">No recent chats</p>
        <a href="#chat" className="text-[#15c]">Start a new one</a>
      </div>
      <div className="mt-auto mr-4 ml-[30px] flex h-[33px] shrink-0 justify-end border-t border-[#e2e2e2]">
        <button aria-label="Contacts" className="flex w-[37px] items-center justify-center text-[#777]"><MdPerson size={19} /></button>
        <button aria-label="Hangouts" className="mr-[41px] flex w-[37px] items-center justify-center border-x border-[#e2e2e2] bg-[#f3f3f3]">
          <Bubble className="h-[17px] w-3.5" fill="#111111" quote="#ffffff" />
        </button>
      </div>
    </aside>
  );
}

const details = [
  ["First Name:", "jaymin"],
  ["Last Name:", "modi"],
  ["School/Library:", "k.k patel"],
  ["Email:", "jaymin.modi.techmitraa@gmail.com"],
  ["Phone:", "8488080145"],
  ["Send me a quote for:", "Yes"],
  ["computers:", "30"],
  ["I would like a 30-day free trial:", "No"],
  ["Send me the free CompuGuardian newsletter:", "No"],
];

function Message() {
  return (
    <main className="min-w-0 flex-1 overflow-hidden pr-[17px] text-[13px] text-[#222]">
      <div className="flex h-[47px] items-center border-b border-[#d8d8d8] pr-[7px] pl-[9px]">
        <h2 className="-mt-0.5 text-[18px]">Safe Outlook Contact Us Enquiry</h2>
        <span className="ml-2 flex h-4 items-center gap-3.5 bg-[#ddd] px-1.5 text-[11px] leading-4 text-[#666]">
          Inbox <button aria-label="Remove label">x</button>
        </span>
        <button aria-label="Print" className="ml-auto text-[#666]"><MdPrint size={17} /></button>
        <button aria-label="Open in new window" className="ml-2">
          <svg viewBox="0 0 12 12" className="h-3 w-3">
            <path d="M2 0h10v10H2z" fill="#666" />
            <path d="M.5 2v9.500H11" fill="none" stroke="#666" />
            <path d="M4.500 7.500l4.500-4.500M5.500 2.700h3.800v3.800" fill="none" stroke="#fff" strokeWidth="1.300" />
          </svg>
        </button>
      </div>

      <article className="flex pt-1.5 pl-[9px]">
        <div className="mt-1.5 mr-3 flex h-8 w-8 shrink-0 items-center justify-center border border-[#e2e2e2] bg-[#f5f5f5] text-[#ccc]">
          <MdPerson size={18} />
        </div>
        <div className="min-w-0 flex-1">
          <div className="flex h-[29px] items-center">
            <p className="-mt-0.5"><b>Safeoutlook</b> <span className="text-[#555]">&lt;email.techmitraa@gmail.com&gt;</span></p>
            <p className="-mt-0.5 ml-auto">19:10 (0 minutes ago)</p>
            <button aria-label="Star" className="mr-1.5 ml-1.5 text-[#ccc]">
              <svg viewBox="0 0 16 16" className="h-4 w-4"><path d="M8 1l2 5h5.300l-4.200 3.300 1.500 5.500L8 11.600l-4.600 3.200 1.500-5.500L.7 6H6z" fill="none" stroke="currentColor" /></svg>
            </button>
            <button aria-label="Reply" className={btn + " w-[50px] rounded-l-[2px]"}><MdReply size={18} /></button>
            <button aria-label="More options" className={btn + " -ml-px w-[23px] rounded-r-[2px]"}>
              <svg viewBox="0 0 7 4" className="h-1 w-[7px]"><path d="M0 0h7L3.500 4z" fill="#666" /></svg>
            </button>
          </div>
          <div className="-mt-[3px] flex h-[15px] items-center gap-1 leading-[15px] text-[#777]">
            to me
            <button aria-label="Show details" className="flex h-3 w-3 items-center justify-center rounded-[1px] border border-[#ccc]">
              <svg viewBox="0 0 6 3" className="h-[3px] w-1.5"><path d="M0 0h6L3 3z" fill="#555" /></svg>
            </button>
          </div>

          <div className="mt-[11px] mr-[15px] leading-[15px]">
            <p>Dear Administrator,</p>
            <p className="mt-[15px]">This is an email from a user through contact us page, below are details.</p>
            <dl className="mt-[15px]">
              {details.map(([k, v]) => (
                <div key={k}>
                  <dt className="inline font-bold">{k}</dt>{" "}
                  <dd className="inline">
                    {v.includes("@") ? <a href={"mailto:" + v} className="text-[#15c] underline">{v}</a> : v}
                  </dd>
                </div>
              ))}
            </dl>
            <hr className="mt-[21px] border-t-2 border-[#800010]" />
            <address className="mt-4 font-['Liberation_Serif',serif] text-[16px] leading-[18px] not-italic">
              Regards,<br />Safe Outlook Support,<br />Administrator
            </address>
          </div>
        </div>
      </article>

      <div className="mt-[41px] mr-[5px] flex border-t border-[#d8d8d8] pt-3 pl-[9px]">
        <div className="mr-[11px] flex h-8 w-8 shrink-0 items-center justify-center border border-[#e2e2e2] bg-[#f5f5f5] text-[#777]">
          <MdPerson size={18} />
        </div>
        <div className="h-[74px] flex-1 border border-t-[#b9b9b9] border-[#d2d2d2] px-3 pt-2 leading-4 text-[#999]">
          Click here to <a href="#reply" className="underline">Reply</a> or <a href="#forward" className="underline">Forward</a>
        </div>
      </div>
      <p className="mt-3 ml-[52px] border border-[#e2e2e2] bg-[#f5f5f5] px-2 py-[7px] leading-4">
        <b>50</b> deleted messages in this conversation. <a href="#view" className="text-[#15c]">View messages</a> or <a href="#delete" className="text-[#15c]">delete forever</a>.
      </p>
    </main>
  );
}

export default function App() {
  return (
    <div className="flex h-screen flex-col overflow-hidden font-['Noto_Sans',sans-serif]">
      <TopPanel />
      <div className="flex min-h-0 flex-1">
        <Launcher />
        <div className="flex min-w-0 flex-1 flex-col bg-white">
          <TabStrip />
          <AddressBar />
          <BookmarksBar />
          <div className="flex min-h-0 flex-1 flex-col font-['Liberation_Sans',Arial,sans-serif]">
            <GoogleHeader />
            <Toolbar />
            <div className="flex min-h-0 flex-1">
              <Sidebar />
              <Message />
              <div className="h-[374px] w-[11px] shrink-0 border-t border-l border-[#aaa] bg-[#ccc]" />
            </div>
          </div>
        </div>
      </div>
    </div>
  );
}
